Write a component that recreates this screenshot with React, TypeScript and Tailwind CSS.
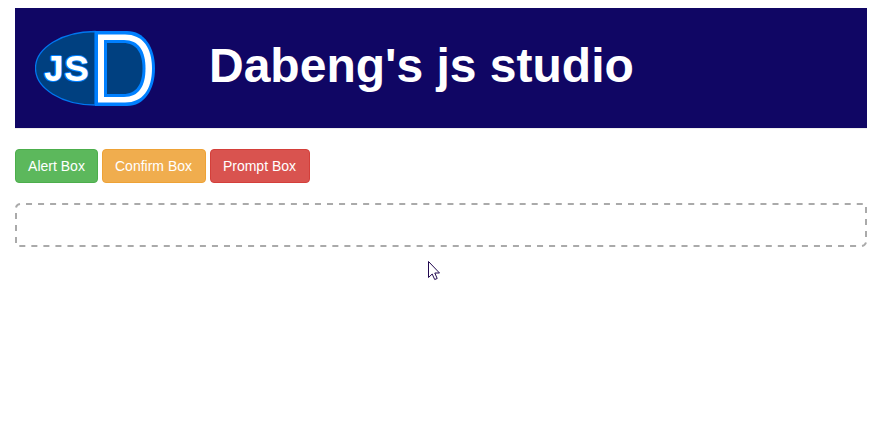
import React from "react";

function Logo() {
  return (
    <svg className="ml-5 h-[76px] w-[121px] shrink-0" viewBox="35 30 121 76">
      <path d="M95 31.5 C62 31.5 35.5 48 35.5 68.3 C35.5 88.500 62 105 95 105Z" fill="#004080" stroke="#0077f0" strokeWidth="1.300" />
      <path d="M95 31 H127 C144 31 155 47 155 68.500 C155 90 144 106 127 106 H95Z" fill="#0080ff" />
      <path d="M98 34.500 H125 C143 34.500 152 48 152 68.500 C152 89 143 102.500 125 102.500 H98Z" fill="#fff" />
      <path d="M104 40 H124 C139 40 145.500 51 145.500 68.500 C145.500 86 139 97 124 97 H104Z" fill="#0080ff" />
      <path d="M107 43 H123 C136.500 43 142.500 53 142.500 68.500 C142.500 84 136.500 94 123 94 H107Z" fill="#004080" />
      <g className="font-['Liberation_Sans',Arial,sans-serif] text-[33px]" fill="#fff" transform="translate(45.300 80) scale(1.060 1)">
        <text letterSpacing="1.800" stroke="#0080ff" strokeWidth="3.800" strokeLinejoin="round">JS</text>
        <text letterSpacing="1.800" stroke="#fff" strokeWidth="1.800" aria-hidden="true">JS</text>
      </g>
    </svg>
  );
}

function Button({ label, color }: { label: string; color: string }) {
  return (
    <button type="button" className={`h-[34px] rounded border text-sm leading-5 whitespace-nowrap text-white ${color}`}>
      {label}
    </button>
  );
}

function DashedOutline() {
  return (
    <svg className="absolute inset-0 h-11 w-[852px]" viewBox="0 0 852 44" fill="none" stroke="#aaa" strokeWidth="2">
      <path d="M11 1 H848.500" strokeDasharray="6.02 6.02" />
      <path d="M851 4 V34.500" strokeDasharray="6 6" />
      <path d="M4.300 43 H842" strokeDasharray="6.02 6.02" />
      <path d="M1 10 V41" strokeDasharray="6 6" />
      <path d="M847 43 Q850 42.500 851 39.500 M1 4.500 Q1.500 1.500 5 1" />
    </svg>
  );
}

export default function App() {
  return (
    <div className="relative h-[437px] bg-white px-[15px] pt-2 font-['Liberation_Sans',Arial,sans-serif]">
      <header className="flex h-[121px] items-center border-b border-[#eee] bg-[#100664]">
        <Logo />
        <h1 className="-mt-[5px] ml-[53px] text-[48px] leading-none font-bold whitespace-nowrap text-white">Dabeng's js studio</h1>
      </header>
      <div className="mt-5 flex gap-1">
        <Button label="Alert Box" color="w-[83px] border-[#4cae4c] bg-[#5cb85c]" />
        <Button label="Confirm Box" color="w-[104px] border-[#eea236] bg-[#f0ad4e] pr-px" />
        <Button label="Prompt Box" color="w-[100px] border-[#d43f3a] bg-[#d9534f] pr-px" />
      </div>
      <div className="relative mt-5 h-11 rounded">
        <DashedOutline />
      </div>
      <svg className="absolute top-[260px] left-[427px] h-[21px] w-[14px]" viewBox="0 0 14 21">
        <path d="M1.500 1.500 V17.500 L5.200 14 L7.700 19.500 L10.200 18.500 L7.800 13 H12.500Z" fill="#fff" stroke="#21084f" strokeWidth="1" />
      </svg>
    </div>
  );
}
